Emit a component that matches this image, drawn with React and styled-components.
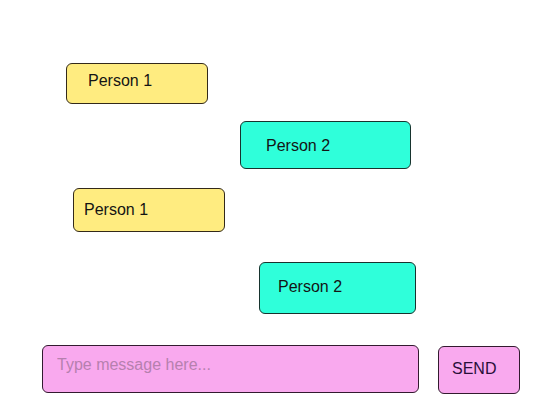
import React from "react";
import styled, { createGlobalStyle } from "styled-components";

const GlobalStyle = createGlobalStyle`
  html, body {
    margin: 0;
    padding: 0;
    background: #ffffff;
  }
  body {
    font-family: "Liberation Sans", Arial, sans-serif;
  }
`;

const Page = styled.div`
  width: 540px;
  height: 405px;
  box-sizing: border-box;
  padding-top: 63px;
  display: flex;
  flex-direction: column;
  background: #ffffff;
`;

const Thread = styled.div`
  display: flex;
  flex-direction: column;
`;

// $shift > 0 moves the label up, < 0 moves it down
const Bubble = styled.div`
  box-sizing: border-box;
  display: flex;
  align-items: center;
  width: ${(p) => p.$width}px;
  height: ${(p) => p.$height}px;
  margin-left: ${(p) => p.$left}px;
  margin-top: ${(p) => p.$gap}px;
  padding-left: ${(p) => p.$pad}px;
  padding-bottom: ${(p) => Math.max(p.$shift, 0)}px;
  padding-top: ${(p) => Math.max(-p.$shift, 0)}px;
  background: ${(p) => (p.$from === 1 ? "#ffec80" : "#2fffda")};
  border: 1.6px solid ${(p) => (p.$from === 1 ? "#33291a" : "#17332e")};
  border-radius: 6px;
  color: #141414;
  font-size: 16px;
`;

const Composer = styled.div`
  display: flex;
  align-items: flex-start;
  margin-top: 31px;
  padding-left: 42px;
`;

const MessageInput = styled.input`
  box-sizing: border-box;
  width: 377px;
  height: 48px;
  padding: 0 0 8px 14px;
  background: #f9a9ee;
  border: 1.6px solid #331a2f;
  border-radius: 6px;
  font-family: "Liberation Sans", Arial, sans-serif;
  font-size: 16px;
  color: #2a0f2a;
  outline: none;
  &::placeholder {
    color: #b680ae;
  }
`;

const SendButton = styled.button`
  box-sizing: border-box;
  width: 82px;
  height: 48px;
  margin-left: 19px;
  margin-top: 1px;
  padding: 0 0 2px 13px;
  text-align: left;
  background: #f9a9ee;
  border: 1.6px solid #331a2f;
  border-radius: 6px;
  font-family: "Liberation Sans", Arial, sans-serif;
  font-size: 16px;
  color: #2a0f3a;
  cursor: pointer;
`;

const messages = [
  { from: 1, text: "Person 1", left: 66, width: 142, height: 41, pad: 21, gap: 0, shift: 6 },
  { from: 2, text: "Person 2", left: 240, width: 171, height: 48, pad: 25, gap: 17, shift: -2 },
  { from: 1, text: "Person 1", left: 73, width: 152, height: 44, pad: 10, gap: 19, shift: 1 },
  { from: 2, text: "Person 2", left: 259, width: 157, height: 52, pad: 18, gap: 30, shift: 3 },
];

export default function App() {
  return (
    <>
      <GlobalStyle />
      <Page>
        <Thread>
          {messages.map((m, i) => (
            <Bubble
              key={i}
              $from={m.from}
              $left={m.left}
              $width={m.width}
              $height={m.height}
              $pad={m.pad}
              $gap={m.gap}
              $shift={m.shift}
            >
              {m.text}
            </Bubble>
          ))}
        </Thread>
        <Composer>
          <MessageInput placeholder="Type message here..." />
          <SendButton>SEND</SendButton>
        </Composer>
      </Page>
    </>
  );
}
